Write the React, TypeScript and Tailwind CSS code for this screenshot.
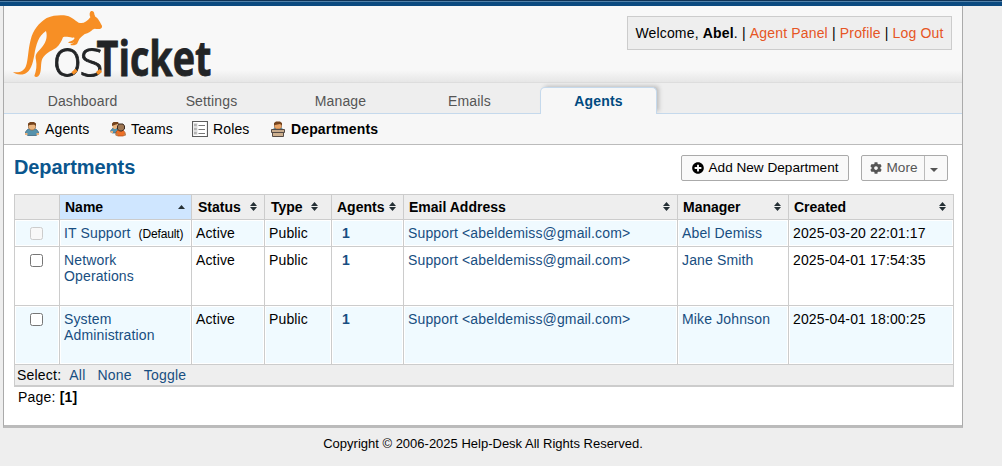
import React from "react";
import { FaCog, FaPlusCircle } from "react-icons/fa";

function Logo() {
  return (
    <svg width="202" height="70" viewBox="12 9 202 70" className="block">
      <g transform="scale(0.33333)" fill="#f78f25">
        <path d="M39 216C58 220 72 213 78 198C85 178 84 148 92 119C99 91 116 69 140 54C158 46 176 45 192 46C214 48 222 60 236 68C248 72 260 67 271 52C267 43 269 35 274 33C280 32 283 37 283 43L286 50C297 56 300 68 306 77C308 86 299 89 284 86C276 88 271 97 262 100C248 103 244 113 238 117L231 132C225 137 216 136 211 135C213 131 220 131 223 127C214 132 208 129 204 128C208 124 216 124 222 118C225 114 223 112 218 113C204 111 196 109 189 112C184 124 180 134 168 144C150 154 135 162 127 176C121 190 125 209 119 223C116 231 107 233 103 228C109 212 111 196 108 180C104 164 110 158 122 146C136 132 144 112 138 93C116 107 108 133 103 165C98 192 92 214 75 221C60 226 46 223 39 216Z" />
      </g>
      <text x="52.500" y="76" textLength="29.500" lengthAdjust="spacingAndGlyphs" fontFamily="Open Sans" fontWeight="300" fontSize="51" fill="#222426" stroke="#222426" strokeWidth="0.8">o</text>
      <text x="79.500" y="76" textLength="24" lengthAdjust="spacingAndGlyphs" fontFamily="Open Sans" fontWeight="300" fontSize="51" fill="#222426" stroke="#222426" strokeWidth="0.8">s</text>
      <text x="96.500" y="76" textLength="115" lengthAdjust="spacingAndGlyphs" fontFamily="Open Sans" fontWeight="700" fontSize="48.5" fill="#222426" stroke="#222426" strokeWidth="0.8">Ticket</text>
      <path d="M72.500 73.500l4-3.500M97 73.500l4-3" stroke="#f78f25" strokeWidth="3.500" />
    </svg>
  );
}

function AgentIcon() {
  return (
    <svg width="16" height="16" viewBox="0 0 16 16">
      <path d="M1.500 13V11L3.500 8.500L6 7.500h4l2.500 1L14.500 11V13L12 14.500H4z" fill="#5592ac" stroke="#3b6680" strokeWidth=".8" />
      <path d="M1 12h2.500v2H1zM12.500 12H15v2h-2.500z" fill="#e8b17d" />
      <path d="M4.500 3h7v4L9.500 9h-3L4.500 7z" fill="#eab57f" stroke="#98663c" strokeWidth=".7" />
      <path d="M4 5V2.500L6 1h4l2 1.500V5L10 3.500L5.500 4z" fill="#74431d" />
    </svg>
  );
}

function TeamIcon() {
  return (
    <svg width="16" height="16" viewBox="0 0 16 16">
      <path d="M.8 11V9.500L3 7h5l2 2v3H2z" fill="#5592ac" stroke="#3b6680" strokeWidth=".7" />
      <path d="M.5 10H3v2H.5z" fill="#e8b17d" />
      <path d="M2.500 3h5v3L6 8H4L2.500 6.500z" fill="#eab57f" />
      <path d="M2 5V2.500L3.500 1H8l1 2L6 3.500z" fill="#74431d" />
      <path d="M6 14V11l2-2h5l2 2.500V14l-2 1H8z" fill="#ee7127" stroke="#b54c13" strokeWidth=".7" />
      <path d="M5.500 12.500H8v2H5.500zM14 12.500h2v2h-2z" fill="#b98253" />
      <path d="M7.500 5L9 3h4l1.500 2v3L12 10H9.500L7.500 8z" fill="#9d7653" stroke="#3d2b20" strokeWidth="1" />
    </svg>
  );
}

function RoleIcon() {
  return (
    <svg width="16" height="16" viewBox="0 0 16 16" fill="none">
      <path d="M.5.5h15v15H.5z" fill="#fff" stroke="#5c5c5c" strokeWidth="1.2" />
      <path d="M2 2h3.500v12H2z" fill="#ddd" />
      <path d="M2.500 4h2M2.500 8h2M2.500 12h2" stroke="#888" strokeWidth="2" strokeDasharray="1 .6" />
      <path d="M6.500 4.500h6.500M6.500 8.500h6.500M6.500 12.500h6.500" stroke="#777" />
    </svg>
  );
}

function DepartmentIcon() {
  return (
    <svg width="16" height="16" viewBox="0 0 16 16">
      <path d="M3 9V8l2-1.500h6L13 8v1z" fill="#4f87a1" />
      <path d="M4.500 2.500h7v4L9.500 8h-3l-2-1.500z" fill="#e9a466" stroke="#98663c" strokeWidth=".7" />
      <path d="M4 4.500V2l2-1.500h4L12 2v2.500L10 3L5 4z" fill="#74431d" />
      <path d="M2.500 10.500h11v5h-11z" fill="#cdb08f" stroke="#554b45" />
      <path d="M1.500 8.500h13v3h-13z" fill="#c7ab8d" stroke="#554b45" />
    </svg>
  );
}

function SortIcon({ up }: { up?: boolean }) {
  return (
    <svg width="7" height="9" viewBox="0 0 7 9" className="mb-px shrink-0" fill="#253035">
      {up ? <path d="M0 7L3.500 3L7 7z" /> : <path d="M0 4L3.500 0L7 4zM0 5h7L3.500 9z" />}
    </svg>
  );
}

const tabs = ["Dashboard", "Settings", "Manage", "Emails"];

const subTabs = [
  { label: "Agents", icon: <AgentIcon />, width: "w-[86px]" },
  { label: "Teams", icon: <TeamIcon />, width: "w-[82px]" },
  { label: "Roles", icon: <RoleIcon />, width: "w-[78px]" },
  { label: "Departments", icon: <DepartmentIcon />, width: "w-[120px] font-bold" },
];

const columns = [
  { label: "", width: "w-[45px]", pad: "" },
  { label: "Name", width: "w-[132px]", pad: "pl-[5px] pr-[6px]" },
  { label: "Status", width: "w-[73px]", pad: "pl-[6px] pr-[7px]" },
  { label: "Type", width: "w-[67px]", pad: "pl-[6px] pr-[13px]" },
  { label: "Agents", width: "w-[72px]", pad: "pl-[5px] pr-[7px]" },
  { label: "Email Address", width: "w-[274px]", pad: "pl-[5px] pr-[7px]" },
  { label: "Manager", width: "w-[111px]", pad: "pl-[5px] pr-[7px]" },
  { label: "Created", width: "w-[165px]", pad: "pl-[5px] pr-[7px]" },
];

const rows = [
  { name: "IT Support", isDefault: true, manager: "Abel Demiss", created: "2025-03-20 22:01:17" },
  { name: "Network Operations", isDefault: false, manager: "Jane Smith", created: "2025-04-01 17:54:35" },
  { name: "System Administration", isDefault: false, manager: "Mike Johnson", created: "2025-04-01 18:00:25" },
];

function Cell({ children, shaded }: { children: React.ReactNode; shaded: boolean }) {
  return (
    <td className="h-px border-r border-b border-[#ccc] p-px align-top">
      <div className={`h-full pt-[4px] pl-[3px] ${shaded ? "bg-[#f0faff]" : "bg-white"}`}>{children}</div>
    </td>
  );
}

export default function App() {
  return (
    <div className="flex h-[466px] w-[1002px] flex-col overflow-hidden bg-[#eee] font-['Liberation_Sans',Arial,sans-serif] text-[14px] leading-4 text-black">
      <div className="h-px bg-[#0f3357]" />
      <div className="h-px bg-[#5080a8]" />
      <div className="h-1 bg-[#0b4a80]" />
      <div className="ml-[3px] flex h-[422px] w-[960px] shrink-0 flex-col border-x border-b-[3px] border-x-[#aaa] border-b-[#bbb] bg-white">
        <header className="flex h-[77px] shrink-0 justify-between border-b border-[#ddd] bg-[linear-gradient(to_bottom,#f8f8f8_84%,#e6e6e6)] pr-[10px] pl-2">
          <div className="pt-[3px]"><Logo /></div>
          <div className="mt-[10px] flex h-[34px] w-[325px] items-center justify-center border border-[#ccc] bg-[#eee] tracking-[0.012em] whitespace-pre">
            Welcome, <b>Abel</b>. | <a className="text-[#e65524]">Agent Panel</a> | <a className="text-[#e65524]">Profile</a> | <a className="text-[#e65524]">Log Out</a>
          </div>
        </header>
        <nav className="flex h-[31px] shrink-0 border-b border-[#c5d9ec] bg-[#eee] pl-[20px] tracking-[0.01em] text-[#555]">
          {tabs.map((t) => (
            <div key={t} className="w-[129px] pt-[10px] pr-[12px] text-center">{t}</div>
          ))}
          <div className="mt-[4px] h-[27px] w-[117px] rounded-t-[5px] border border-b-0 border-[#c5d9ec] bg-[#f7f7f7] pt-[5px] text-center font-bold text-[#004a80] shadow-[3px_-2px_4px_-1px_#bbb] [clip-path:inset(-6px_-8px_0_-6px)]">Agents</div>
        </nav>
        <div className="flex h-[31px] shrink-0 items-center border-b border-[#bbb] bg-[#f7f7f7] pl-[20px] tracking-[0.01em]">
          {subTabs.map((t) => (
            <div key={t.label} className={`flex shrink-0 items-center gap-[5px] ${t.width}`}>{t.icon}<span>{t.label}</span></div>
          ))}
        </div>
        <main className="px-[10px]">
          <div className="flex h-[49px] items-start">
            <h2 className="mt-[11px] mr-auto text-[20px] leading-[22px] font-bold tracking-[-0.005em] text-[#0a568e]">Departments</h2>
            <button className="mt-[10px] mr-3 flex h-[26px] w-[168px] items-center justify-center gap-[5px] rounded-[2px] border border-[#aaa] bg-[#f9f9f9] text-[13.6px]">
              <FaPlusCircle size={12} />Add New Department
            </button>
            <div className="mt-[10px] mr-[4px] flex h-[26px] w-[87px] rounded-[2px] border border-[#aaa] bg-[#f9f9f9] text-[13.6px] text-[#555]">
              <div className="flex w-[63px] items-center justify-center gap-[5px] border-r border-[#bbb] pl-px"><FaCog size={12} />More</div>
              <div className="flex flex-1 items-center justify-center pt-1 pr-1">
                <svg width="8" height="4" viewBox="0 0 8 4" fill="#555"><path d="M0 0h8L4 4z" /></svg>
              </div>
            </div>
          </div>
          <table className="w-[940px] table-fixed border-separate border-spacing-0 border-t border-l border-[#ccc]">
            <thead>
              <tr className="h-[25px]">
                {columns.map((c) => (
                  <th key={c.label} className={`border-r border-b border-[#ccc] p-0 ${c.width} ${c.label === "Name" ? "bg-[#cfe6ff]" : "bg-[#eee]"}`}>
                    {c.label && (
                      <div className={`flex items-center justify-between ${c.pad}`}><span>{c.label}</span><SortIcon up={c.label === "Name"} /></div>
                    )}
                  </th>
                ))}
              </tr>
            </thead>
            <tbody className="tracking-[0.01em]">
              {rows.map((r, i) => {
                const shaded = i % 2 === 0;
                return (
                  <tr key={r.name} className={i === 0 ? "h-[27px]" : "h-[59px]"}>
                    <Cell shaded={shaded}>
                      <div className={`mt-[2px] ml-[11px] size-[13px] rounded-[2.5px] border ${r.isDefault ? "border-[#ccc] bg-[#f8f8f8]" : "border-[#767676] bg-white"}`} />
                    </Cell>
                    <Cell shaded={shaded}>
                      <a className="text-[#184e81]">{r.name}</a>
                      {r.isDefault && <span className="ml-[8px] text-[12px] tracking-[-0.01em]">(Default)</span>}
                    </Cell>
                    <Cell shaded={shaded}>Active</Cell>
                    <Cell shaded={shaded}>Public</Cell>
                    <Cell shaded={shaded}><b className="ml-[6px] text-[#184e81]">1</b></Cell>
                    <Cell shaded={shaded}><a className="text-[#184e81]">Support &lt;abeldemiss@gmail.com&gt;</a></Cell>
                    <Cell shaded={shaded}><a className="text-[#184e81]">{r.manager}</a></Cell>
                    <Cell shaded={shaded}>{r.created}</Cell>
                  </tr>
                );
              })}
            </tbody>
            <tfoot>
              <tr className="h-[22px]">
                <td colSpan={8} className="border-r border-b-2 border-[#ccc] bg-[#eee] p-0">
                  <div className="flex gap-3 pl-[2px] tracking-[0.015em]"><span className="-mr-1">Select:</span><a className="text-[#184e81]">All</a><a className="text-[#184e81]">None</a><a className="text-[#184e81]">Toggle</a></div>
                </td>
              </tr>
            </tfoot>
          </table>
          <div className="pt-[2px] pl-1 tracking-[0.015em]">Page: <b>[1]</b></div>
        </main>
      </div>
      <footer className="w-[966px] pt-[8px] text-center text-[13px] leading-4">Copyright © 2006-2025 Help-Desk All Rights Reserved.</footer>
    </div>
  );
}
